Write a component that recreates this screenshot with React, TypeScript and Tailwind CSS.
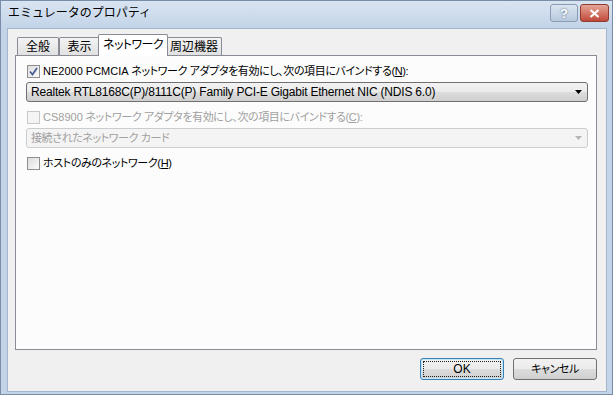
import React from "react";

const font = "[font-family:'Liberation_Sans','Noto_Sans_CJK_JP',sans-serif] [font-feature-settings:'palt']";
const jp = "text-[11px] tracking-[-0.4px]";

function Check({ checked, disabled }: { checked?: boolean; disabled?: boolean }) {
  return (
    <div
      className={
        "w-[13px] h-[13px] border flex items-center justify-center shrink-0 " +
        (disabled
          ? "border-[#c8c8c8] bg-[#f4f4f4]"
          : "border-[#8f8f8f] bg-gradient-to-br from-[#dcdcdc] to-[#fbfbfb]")
      }
    >
      {checked && (
        <svg width="9" height="9" viewBox="0 0 9 9">
          <path d="M1 4.5 L3.5 7.5 L8 1" stroke="#4a5f97" strokeWidth="1.8" fill="none" />
        </svg>
      )}
    </div>
  );
}

function Arrow({ color }: { color: string }) {
  return (
    <svg width="7" height="4" viewBox="0 0 7 4">
      <path d="M0 0 H7 L3.5 4 Z" fill={color} />
    </svg>
  );
}

function Tab({ label, selected, w }: { label: string; selected?: boolean; w: string }) {
  if (selected) {
    return (
      <div
        className={
          "relative z-10 -mx-[2px] h-[22px] border border-b-0 border-[#898c95] rounded-t-[2px] bg-white flex items-center justify-center pb-[2px] text-[12px] tracking-[-0.6px] " +
          w
        }
      >
        {label}
      </div>
    );
  }
  return (
    <div
      className={
        "h-[18px] mt-[3px] border border-b-0 border-[#898c95] rounded-t-[2px] bg-gradient-to-b from-[#f3f3f3] to-[#e1e1e1] flex items-center justify-center text-[12px] " +
        w
      }
    >
      {label}
    </div>
  );
}

const btnBg =
  "bg-[linear-gradient(to_bottom,#f2f2f2_0%,#ebebeb_50%,#dddddd_50%,#cfcfcf_100%)]";

export default function App() {
  return (
    <div className={"w-[613px] h-[395px] bg-[#c3d4e8] border border-[#7a8da8] flex flex-col text-[12px] text-black leading-none " + font}>
      {/* title bar */}
      <div className="h-[27px] flex items-start bg-gradient-to-b from-[#d9e4f1] to-[#c3d4e8] shrink-0">
        <div className="pl-[7px] pt-[6px] text-[12px] [font-feature-settings:normal]">エミュレータのプロパティ</div>
        <div className="ml-auto flex gap-[2px] pt-[3px] pr-[3px]">
          <div className="w-[28px] h-[18px] rounded-[3px] border border-[#8a9bb4] bg-gradient-to-b from-[#dbe5f0] to-[#b8c9de] flex items-center justify-center text-white font-bold text-[13px] [text-shadow:0_0_2px_#3b4f6e]">
            ?
          </div>
          <div className="w-[29px] h-[18px] rounded-[3px] border border-[#8e3c31] bg-gradient-to-b from-[#e4a596] to-[#c0473a] flex items-center justify-center">
            <svg width="11" height="9" viewBox="0 0 11 9">
              <path d="M1.5 1 L9.5 8 M9.5 1 L1.5 8" stroke="#fff" strokeWidth="2.2" />
            </svg>
          </div>
        </div>
      </div>
      {/* client area */}
      <div className="flex-1 ml-[6px] mr-[5px] mb-[2px] bg-[#f0f0f0] border border-[#a4b6cd] flex flex-col pl-[7px] pr-[9px] pt-[5px]">
        {/* tabs */}
        <div className="flex h-[22px] pl-[2px] relative z-10 -mb-px">
          <Tab label="全般" w="w-[42px]" />
          <Tab label="表示" w="w-[41px]" />
          <Tab label="ネットワーク" w="w-[70px]" selected />
          <Tab label="周辺機器" w="w-[56px]" />
        </div>
        <div className="h-[295px] border border-[#898c95] bg-[#fcfcfc] flex flex-col pl-[10px] pr-[8px] pt-[9px]">
          <div className="flex items-center h-[13px] pl-[1px] gap-[3px]">
            <Check checked />
            <span className={jp}>
              <span className="tracking-normal">NE2000 PCMCIA</span> ネットワーク アダプタを有効にし、次の項目にバインドする(<u>N</u>):
            </span>
          </div>
          <div className={"mt-[4px] h-[20px] border border-[#707070] rounded-[3px] flex items-center pl-[4px] pr-[5px] " + btnBg}>
            <span className="flex-1 tracking-[-0.2px]">Realtek RTL8168C(P)/8111C(P) Family PCI-E Gigabit Ethernet NIC (NDIS 6.0)</span>
            <Arrow color="#000" />
          </div>
          <div className="mt-[9px] flex items-center h-[13px] pl-[1px] gap-[3px] text-[#a0a0a0]">
            <Check disabled />
            <span className={jp}>
              <span className="tracking-normal">CS8900</span> ネットワーク アダプタを有効にし、次の項目にバインドする(<u>C</u>):
            </span>
          </div>
          <div className="mt-[4px] h-[20px] border border-[#c9cdd0] rounded-[3px] bg-[#f4f4f4] flex items-center pl-[4px] pr-[5px] text-[#a0a0a0]">
            <span className={"flex-1 " + jp}>接続されたネットワーク カード</span>
            <Arrow color="#b4b4b4" />
          </div>
          <div className="mt-[9px] flex items-center h-[13px] pl-[1px] gap-[3px]">
            <Check />
            <span className={jp}>
              ホストのみのネットワーク(<u>H</u>)
            </span>
          </div>
        </div>
        {/* buttons */}
        <div className="flex justify-end gap-[9px] mt-[8px]">
          <div className={"w-[84px] h-[22px] rounded-[3px] border border-[#3c7fb1] shadow-[inset_0_0_0_1px_#bfe6f9] p-[2px] " + btnBg}>
            <div className="w-full h-full border border-dotted border-[#202020] flex items-center justify-center">OK</div>
          </div>
          <div className={"w-[84px] h-[22px] rounded-[3px] border border-[#707070] flex items-center justify-center " + btnBg}>
            <span className={jp}>キャンセル</span>
          </div>
        </div>
      </div>
    </div>
  );
}
